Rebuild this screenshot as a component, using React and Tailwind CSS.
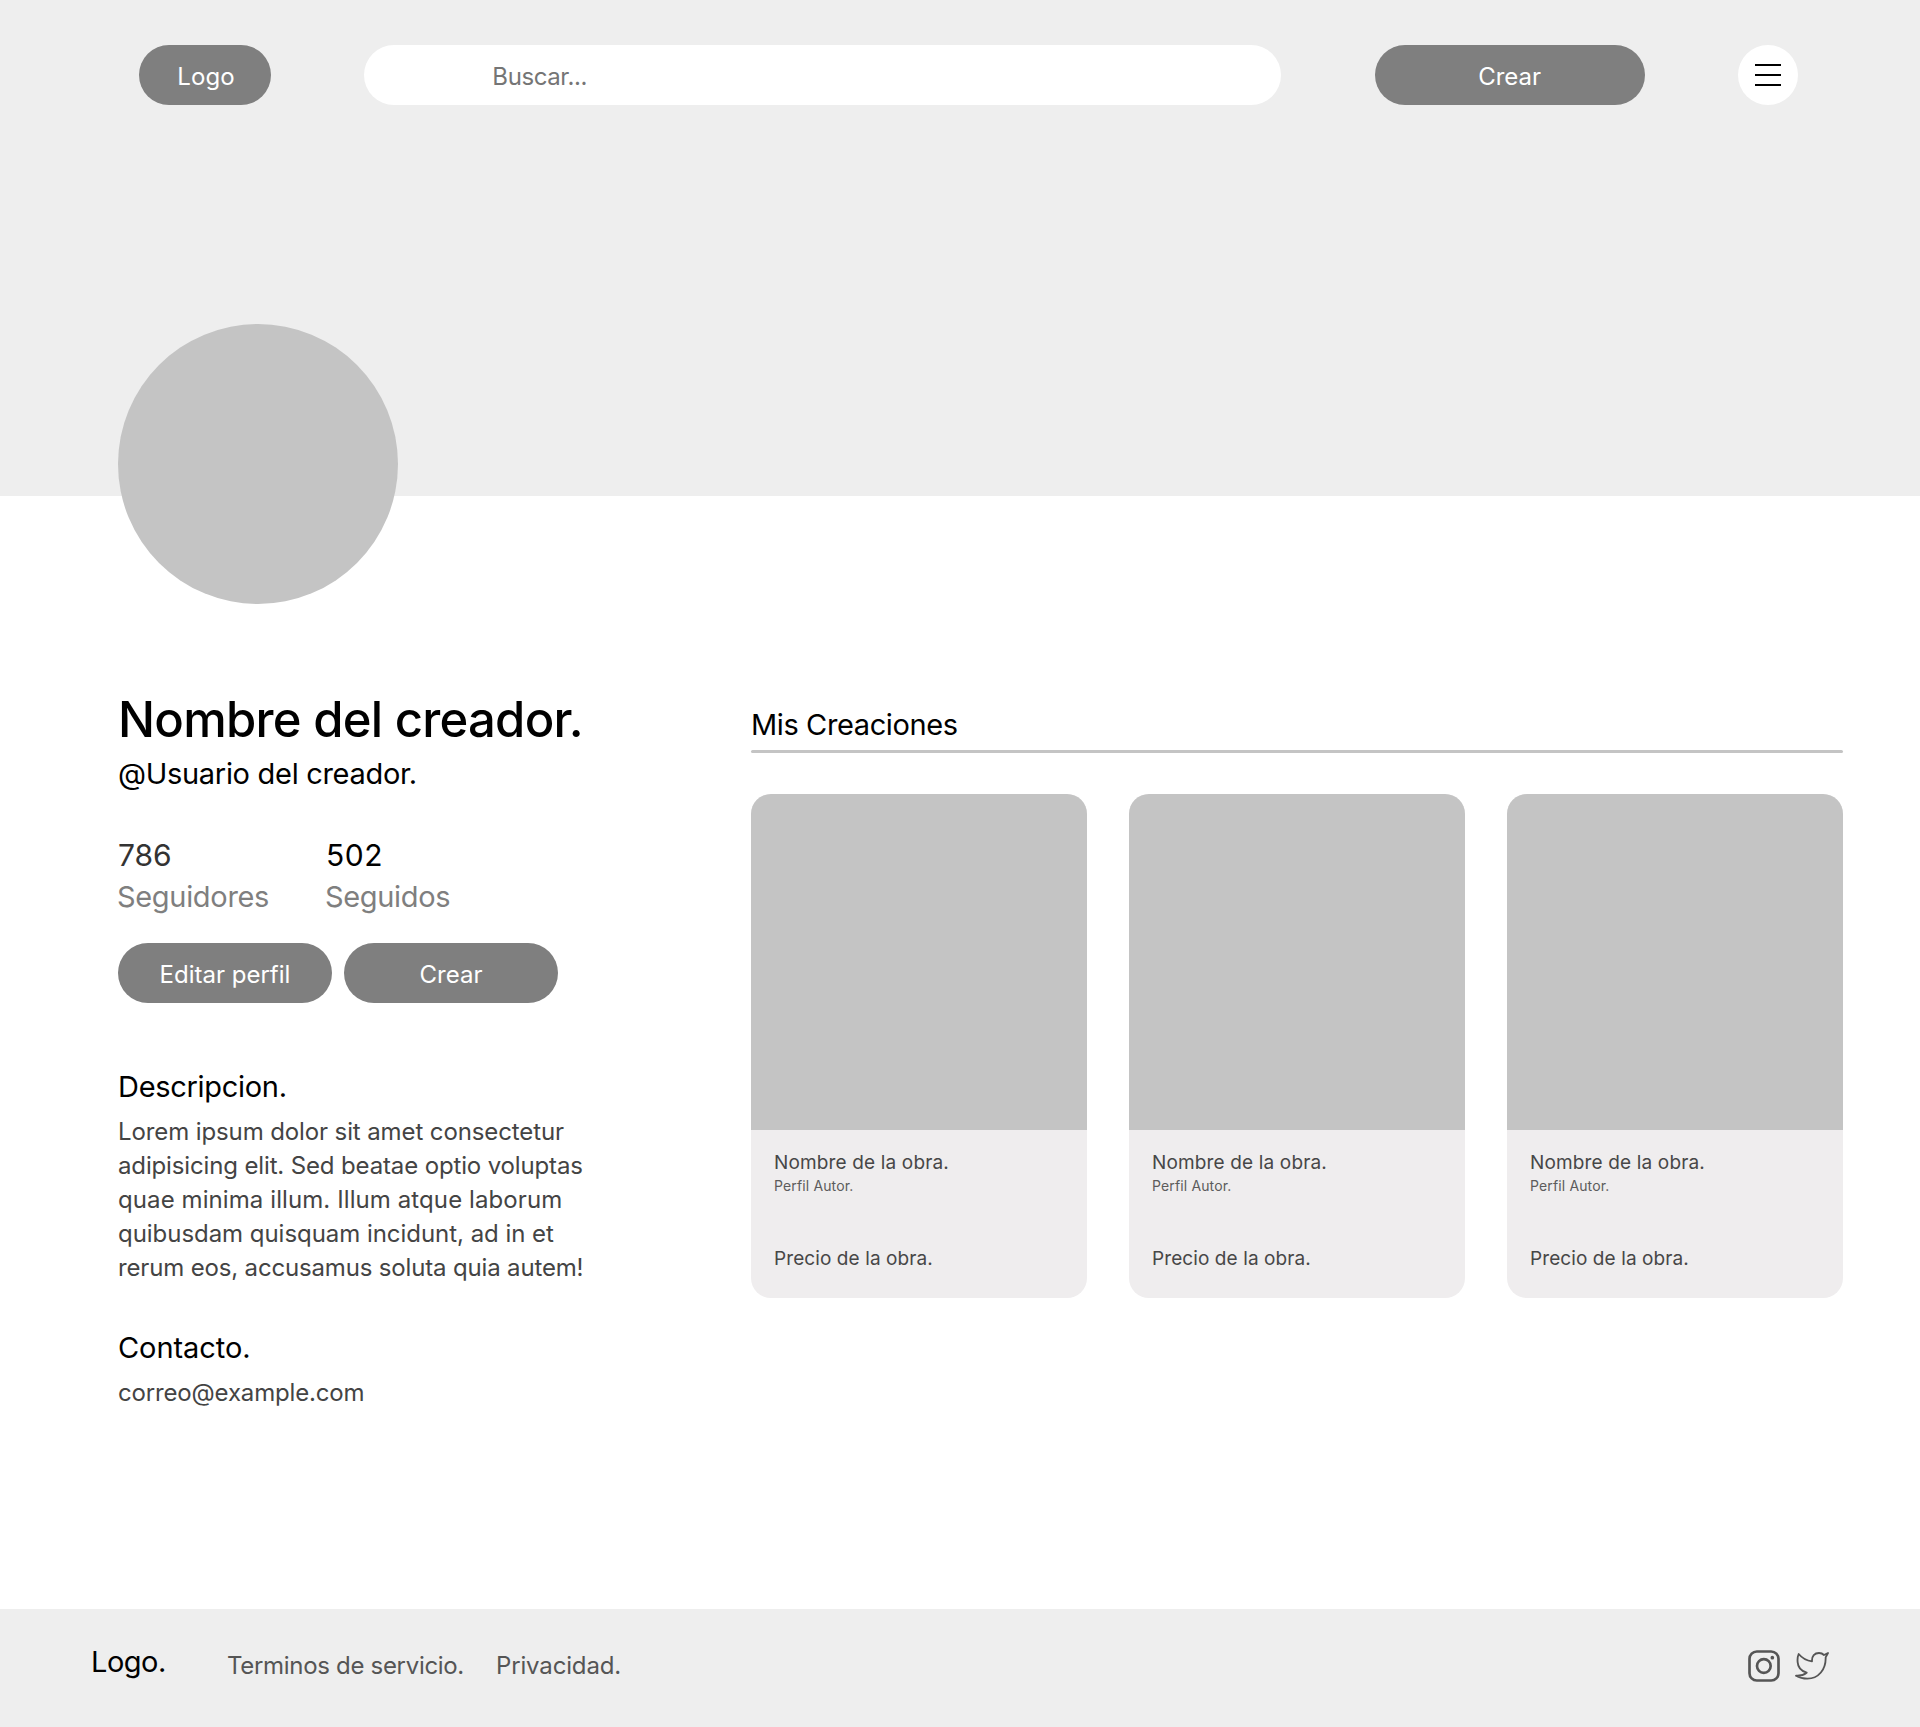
const pill =
  "flex h-[60px] items-center justify-center rounded-[30px] bg-[#7f7f7f] pt-[3px] text-[24px] text-white";

const works = [1, 2, 3];

function MenuIcon() {
  return (
    <svg width="26" height="22" viewBox="0 0 26 22" fill="#000">
      <rect x="0" y="0" width="26" height="2" />
      <rect x="0" y="10" width="26" height="2" />
      <rect x="0" y="20" width="26" height="2" />
    </svg>
  );
}

function InstagramIcon() {
  return (
    <svg width="32" height="32" viewBox="0 0 96 96" fill="none" stroke="#555" strokeWidth="8">
      <rect x="4.5" y="4.5" width="87" height="87" rx="22" />
      <circle cx="47.5" cy="48" r="20.5" />
      <circle cx="73" cy="23" r="5.5" fill="#555" stroke="none" />
    </svg>
  );
}

function TwitterIcon() {
  return (
    <svg
      width="35"
      height="32"
      viewBox="225 60 105 96"
      fill="none"
      stroke="#555"
      strokeWidth="5.5"
      strokeLinejoin="round"
    >
      <path d="M236 72C246 84 259 92 276 94C275 78 284 69 297 69C303 69 308 71 312 75L324 69L317 82C318 118 296 146 262 146C249 146 238 143 228 137C240 138 251 135 260 128C244 123 234 113 233 97C232 88 233 79 236 72Z" />
    </svg>
  );
}

function WorkCard() {
  return (
    <article className="w-[336px] overflow-hidden rounded-[20px] bg-[#efedee]">
      <div className="h-[336px] bg-[#c4c4c4]" />
      <div className="h-[168px] px-[23px] pt-[21px] text-[#474747]">
        <h3 className="text-[19px] leading-[24px] tracking-[0.15px]">Nombre de la obra.</h3>
        <p className="mt-px text-[14px] leading-[20px] tracking-[0.14px] text-[#5c5c5c]">Perfil Autor.</p>
        <p className="mt-[51px] text-[19px] leading-[24px] tracking-[0.09px]">Precio de la obra.</p>
      </div>
    </article>
  );
}

export default function App() {
  return (
    <div className="w-[1920px] bg-white font-['Inter','Liberation_Sans',sans-serif] text-black">
      <div className="h-[496px] bg-[#eee] pt-[45px]">
        <header className="flex items-center justify-between pl-[139px] pr-[122px]">
          <div className={`${pill} w-[132px] pl-[2px] tracking-[0.1px]`}>Logo</div>
          <input
            type="text"
            placeholder="Buscar..."
            className="h-[60px] w-[917px] rounded-[30px] bg-white pl-[128px] pt-[2px] text-[24px] tracking-[-0.39px] placeholder:text-[#757575]"
          />
          <button className={`${pill} w-[270px]`}>Crear</button>
          <button className="flex size-[60px] items-center justify-center rounded-full bg-white">
            <MenuIcon />
          </button>
        </header>
      </div>

      <main className="pl-[118px] pr-[77px]">
        <div className="relative -mt-[172px] size-[280px] rounded-full bg-[#c4c4c4]" />

        <div className="flex justify-between pt-[86px]">
          <section className="w-[500px]">
            <h1 className="text-[49px] font-medium leading-[59px] tracking-[-0.74px]">Nombre del creador.</h1>
            <p className="mt-1 text-[29px] leading-[41px] tracking-[-0.3px]">@Usuario del creador.</p>

            <div className="mt-[41px] grid grid-cols-[208px_1fr] text-[29px] leading-[41px]">
              <span className="text-[30px] tracking-[-0.1px] text-[#333]">786</span>
              <span className="text-[30px] tracking-[0.5px]">502</span>
              <span className="-ml-px tracking-[-0.32px] text-[#7f7f7f]">Seguidores</span>
              <span className="-ml-px tracking-[-0.35px] text-[#7f7f7f]">Seguidos</span>
            </div>

            <div className="mt-[26px] flex gap-3">
              <button className={`${pill} w-[214px]`}>Editar perfil</button>
              <button className={`${pill} w-[214px]`}>Crear</button>
            </div>

            <h2 className="mt-[63px] text-[29px] leading-[41px] tracking-[-0.3px]">Descripcion.</h2>
            <p className="mt-[8px] text-[24px] leading-[34px] text-[#444]">
              <span className="block tracking-[-0.11px]">Lorem ipsum dolor sit amet consectetur</span>
              <span className="block tracking-[-0.14px]">adipisicing elit. Sed beatae optio voluptas</span>
              <span className="block tracking-[0.09px]">quae minima illum. Illum atque laborum</span>
              <span className="block tracking-[-0.04px]">quibusdam quisquam incidunt, ad in et</span>
              <span className="block tracking-[-0.16px]">rerum eos, accusamus soluta quia autem!</span>
            </p>

            <h2 className="mt-[42px] text-[29px] leading-[41px] tracking-[-0.07px]">Contacto.</h2>
            <p className="mt-[8px] text-[24px] leading-[34px] tracking-[-0.16px] text-[#444]">correo@example.com</p>
          </section>

          <section className="w-[1092px] pt-[14px]">
            <h2 className="text-[29px] leading-[41px] tracking-[-0.39px]">Mis Creaciones</h2>
            <div className="mt-[5px] h-[3px] rounded-full bg-[#c4c4c4]" />
            <div className="mt-[41px] flex gap-[42px]">
              {works.map((id) => (
                <WorkCard key={id} />
              ))}
            </div>
          </section>
        </div>
      </main>

      <footer className="mt-[199px] flex h-[118px] items-center bg-[#eee] pl-[91px] pr-[90px]">
        <div className="w-[136px] pb-[13px] text-[29px] leading-[41px] tracking-[-0.5px]">Logo.</div>
        <nav className="flex pb-[5px] text-[24px] leading-[34px] text-[#555]">
          <a className="w-[269px] tracking-[-0.31px]">Terminos de servicio.</a>
          <a className="tracking-[-0.15px]">Privacidad.</a>
        </nav>
        <div className="ml-auto flex gap-[15px] pb-[4px]">
          <InstagramIcon />
          <TwitterIcon />
        </div>
      </footer>
    </div>
  );
}
